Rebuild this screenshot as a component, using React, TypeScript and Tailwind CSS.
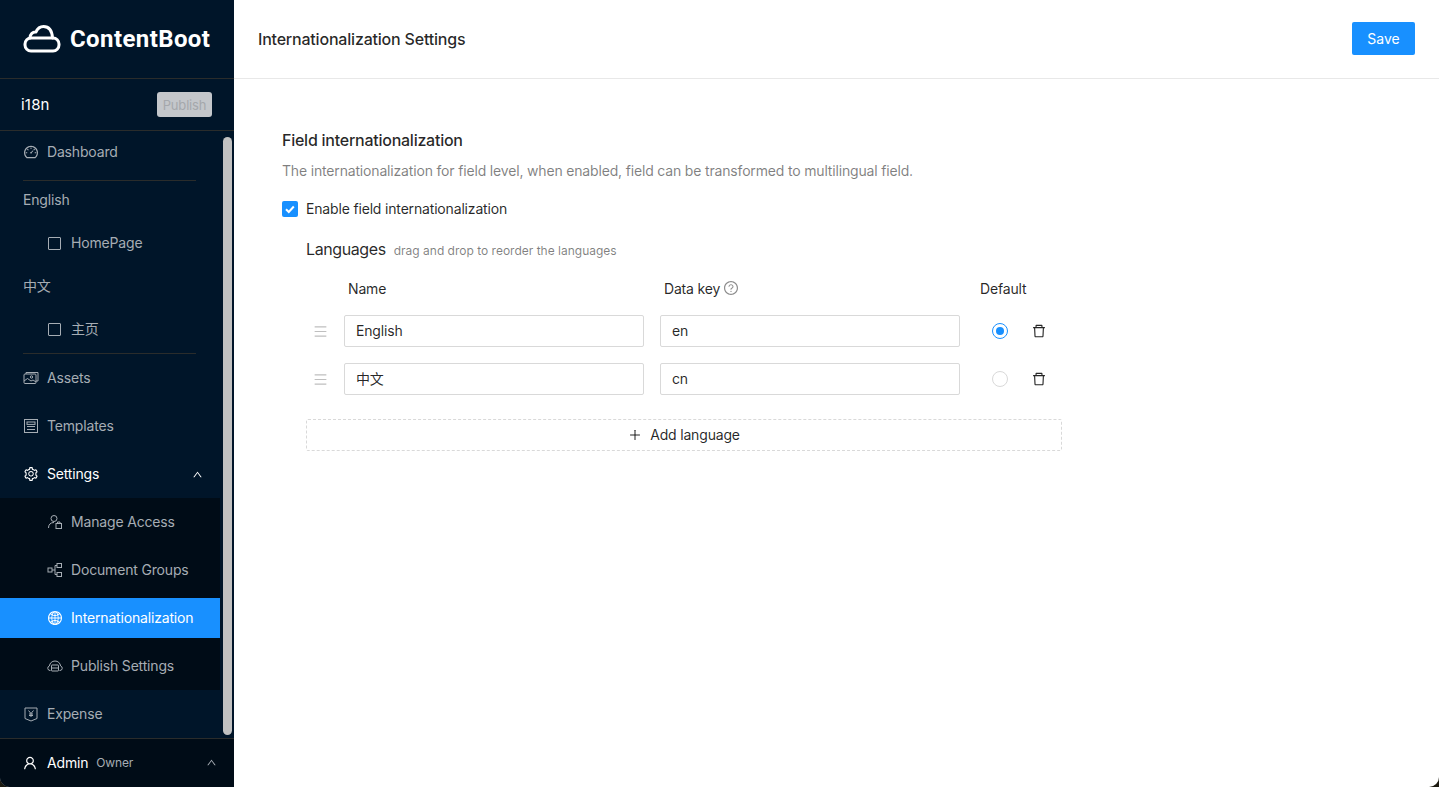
import React from "react";
import {
  AiOutlineDashboard,
  AiOutlineSetting,
  AiOutlineUser,
  AiOutlineUp,
  AiOutlineGlobal,
  AiOutlineDelete,
  AiOutlineQuestionCircle,
  AiOutlinePlus,
  AiOutlineMenu,
} from "react-icons/ai";

const Stroke = ({ children }: { children: React.ReactNode }) => (
  <svg viewBox="0 0 16 16" className="w-4 h-4 shrink-0" fill="none" stroke="currentColor" strokeWidth="1">
    {children}
  </svg>
);

const PageIcon = () => <span className="w-[13px] h-[13px] ml-px mr-[2px] border border-current shrink-0 rounded-[1px]" />;
const AssetsIcon = () => (
  <Stroke>
    <rect x="1" y="4" width="12" height="9.500" rx="1" />
    <path d="M3 4V2.500h12V11h-2" />
    <circle cx="8.500" cy="7" r="1.200" />
    <path d="M1 11l3.500-2.500L8 11l2-1 3 2" />
  </Stroke>
);
const TemplateIcon = () => (
  <Stroke>
    <rect x="1.500" y="1.500" width="13" height="13" />
    <rect x="4" y="4" width="8" height="2.400" />
    <path d="M4 8.500h8M4 11.500h8" />
  </Stroke>
);
const AccessIcon = () => (
  <Stroke>
    <circle cx="7" cy="4.500" r="3" />
    <path d="M1.500 14c0-3.500 2-5.500 5.500-5.500" />
    <rect x="9" y="9.500" width="5.500" height="5" />
    <path d="M10.500 9.500V8h2.500v1.500" />
  </Stroke>
);
const GroupIcon = () => (
  <Stroke>
    <rect x="1" y="6" width="4" height="4" />
    <rect x="10" y="1.500" width="4.500" height="4" />
    <rect x="10" y="10.500" width="4.500" height="4" />
    <path d="M5 8h3M8 3.500v9M8 3.500h2M8 12.500h2" />
  </Stroke>
);
const PublishIcon = () => (
  <Stroke>
    <path d="M3.500 12.500H3a2.300 2.300 0 0 1-.6-4.500C2.800 5 5 3 8 3s5.200 2 5.600 5a2.300 2.300 0 0 1-.6 4.500h-.5" />
    <rect x="4.500" y="7" width="7" height="6" rx=".5" />
    <path d="M4.500 10h7" />
  </Stroke>
);
const ExpenseIcon = () => (
  <Stroke>
    <path d="M2 2h12v10.500L8 15l-6-2.500z" />
    <path d="M5.500 4.500L8 7.500l2.500-3M8 7.500V11M6 8h4M6 9.500h4" />
  </Stroke>
);

const Item = ({
  icon,
  label,
  sub,
  className = "",
}: {
  icon: React.ReactNode;
  label: string;
  sub?: boolean;
  className?: string;
}) => (
  <div className={`h-10 flex items-center gap-2 ${sub ? "pl-[47px]" : "pl-[23px]"} ${className}`}>
    {icon}
    <span className="mb-[2px]">{label}</span>
  </div>
);

const Divider = ({ className = "" }: { className?: string }) => (
  <div className={`h-px w-[173px] ml-[23px] bg-[#2a2c2b] ${className}`} />
);

const Sidebar = () => (
  <aside className="w-[234px] shrink-0 h-full bg-[#001529] flex flex-col text-[14px] text-[#a6adb4]">
    <div className="h-[79px] shrink-0 border-b border-[#2a2c2b] flex items-center pl-[23px] gap-[9px]">
      <svg viewBox="0 0 38 28" className="w-[38px] h-[28px]" fill="none" stroke="white" strokeWidth="3" strokeLinejoin="round" strokeLinecap="round">
        <path d="M8 26h22a6 6 0 0 0 6-6v-1a6 6 0 0 0-6-6H8a6 6 0 0 0-6 6v1a6 6 0 0 0 6 6z" />
        <path d="M7 13C7 9 10 6.500 13 7c1.500-3.500 4-5.500 7.500-5.500 5 0 8.500 3.500 9 11.500" />
      </svg>
      <span className="font-['Roboto',sans-serif] font-bold text-[24px] leading-none text-white tracking-[0.4px]">ContentBoot</span>
    </div>
    <div className="h-[52px] shrink-0 border-b border-[#2a2c2b] flex items-center justify-between pl-[21px] pr-[22px]">
      <span className="text-white text-[15px] tracking-[0.2px] mt-[2px]">i18n</span>
      <button className="w-[55px] h-[25px] rounded-[3px] bg-[#c4c7cb] text-[#a5a8ac] text-[13px] flex items-center justify-center pt-[2px]">Publish</button>
    </div>
    <div className="flex-1 min-h-0 flex">
      <nav className="w-[220px] shrink-0 pt-px flex flex-col">
        <Item icon={<AiOutlineDashboard className="w-4 h-4 shrink-0" />} label="Dashboard" />
        <Divider className="mt-2" />
        <div className="h-10 pl-[23px] flex items-center -mt-px pb-[2px]">English</div>
        <Item sub icon={<PageIcon />} label="HomePage" className="mt-[3px]" />
        <div className="h-[46px] pl-[23px] flex items-center pb-[2px]">中文</div>
        <Item sub icon={<PageIcon />} label="主页" />
        <Divider className="mt-1" />
        <Item icon={<AssetsIcon />} label="Assets" className="mt-1" />
        <Item icon={<TemplateIcon />} label="Templates" className="mt-2" />
        <div className="h-10 mt-2 flex items-center pl-[23px] pr-[17px] gap-2 text-white">
          <AiOutlineSetting className="w-4 h-4 shrink-0" />
          <span className="flex-1 mb-[2px]">Settings</span>
          <AiOutlineUp className="w-[11px] h-[11px]" />
        </div>
        <div className="mt-1 bg-[#000c17] py-1 flex flex-col gap-2">
          <Item sub icon={<AccessIcon />} label="Manage Access" />
          <Item sub icon={<GroupIcon />} label="Document Groups" />
          <Item sub icon={<AiOutlineGlobal className="w-4 h-4 shrink-0" />} label="Internationalization" className="bg-[#1890ff] text-white" />
          <Item sub icon={<PublishIcon />} label="Publish Settings" />
        </div>
        <Item icon={<ExpenseIcon />} label="Expense" className="mt-1" />
      </nav>
      <div className="w-[9px] ml-[3px] mt-[6px] mb-[3px] rounded-full bg-[#c1c1c1]" />
    </div>
    <div className="h-[49px] shrink-0 bg-[#000c17] border-t border-[#2a2c2b] flex items-center pl-[22px] pr-[17px] pb-px">
      <AiOutlineUser className="w-4 h-4 text-white mr-[9px]" />
      <span className="text-white">Admin</span>
      <span className="text-[12px] ml-2 flex-1">Owner</span>
      <AiOutlineUp className="w-[11px] h-[11px]" />
    </div>
  </aside>
);

const Input = ({ value }: { value: string }) => (
  <div className="w-[300px] h-8 border border-[#d9d9d9] rounded-[2px] px-[11px] pb-[2px] flex items-center text-[#000000d9] bg-white">{value}</div>
);

const Row = ({ name, dataKey, checked }: { name: string; dataKey: string; checked?: boolean }) => (
  <div className="flex items-center h-8">
    <AiOutlineMenu className="w-[15px] h-[15px] text-[#bfbfbf] ml-[7px] mr-[16px]" />
    <Input value={name} />
    <div className="w-4" />
    <Input value={dataKey} />
    <span
      className={`ml-[32px] w-4 h-4 rounded-full border bg-white flex items-center justify-center ${checked ? "border-[#1890ff]" : "border-[#d9d9d9]"}`}
    >
      {checked && <span className="w-2 h-2 rounded-full bg-[#1890ff]" />}
    </span>
    <AiOutlineDelete className="w-4 h-4 ml-[23px] text-[#262626]" />
  </div>
);

export default function App() {
  return (
    <div className="w-[1439px] h-[787px] overflow-hidden bg-[#1c1a10] font-['Inter','Noto_Sans_CJK_SC',sans-serif] tracking-[-0.17px]">
      <div className="h-full flex rounded-b-[10px] overflow-hidden bg-white">
        <Sidebar />
        <main className="flex-1 min-w-0 flex flex-col text-[14px] text-[#000000d9]">
          <header className="h-[79px] shrink-0 border-b border-[#e8e8e8] flex items-center justify-between pl-6 pr-6">
            <h1 className="text-[16px] font-medium tracking-[-0.2px]">Internationalization Settings</h1>
            <button className="w-[63px] h-[33px] mb-px bg-[#1890ff] rounded-[2px] text-white tracking-normal">Save</button>
          </header>
          <section className="pl-12 pt-[49px]">
            <h2 className="text-[16px] font-medium leading-6 tracking-[-0.25px]">Field internationalization</h2>
            <p className="mt-[8px] leading-[22px] text-[#00000080]">
              The internationalization for field level, when enabled, field can be transformed to multilingual field.
            </p>
            <div className="mt-[16px] flex items-center h-[22px] gap-2">
              <span className="w-4 h-4 rounded-[2px] bg-[#1890ff] flex items-center justify-center">
                <svg viewBox="0 0 16 16" className="w-4 h-4" fill="none" stroke="white" strokeWidth="2">
                  <path d="M4 8.200l2.800 2.800 5-5.500" />
                </svg>
              </span>
              <span className="mb-[2px]">Enable field internationalization</span>
            </div>
            <div className="ml-6 mt-[17px] w-[756px]">
              <div className="flex items-baseline h-6">
                <span className="text-[16px] tracking-[-0.4px]">Languages</span>
                <span className="text-[12px] tracking-[0px] text-[#00000080] ml-2">drag and drop to reorder the languages</span>
              </div>
              <div className="flex items-center h-[22px] mt-[16px]">
                <span className="ml-[42px] w-[316px]">Name</span>
                <span className="w-[316px] flex items-center gap-[3px]">
                  Data key
                  <AiOutlineQuestionCircle className="w-4 h-4 text-[#00000073]" />
                </span>
                <span>Default</span>
              </div>
              <div className="mt-[16px] flex flex-col gap-4">
                <Row name="English" dataKey="en" checked />
                <Row name="中文" dataKey="cn" />
              </div>
              <div className="mt-6 h-8 border border-dashed border-[#d9d9d9] rounded-[2px] flex items-center justify-center gap-2">
                <AiOutlinePlus className="w-[14px] h-[14px]" />
                <span className="mb-[2px]">Add language</span>
              </div>
            </div>
          </section>
        </main>
      </div>
    </div>
  );
}
